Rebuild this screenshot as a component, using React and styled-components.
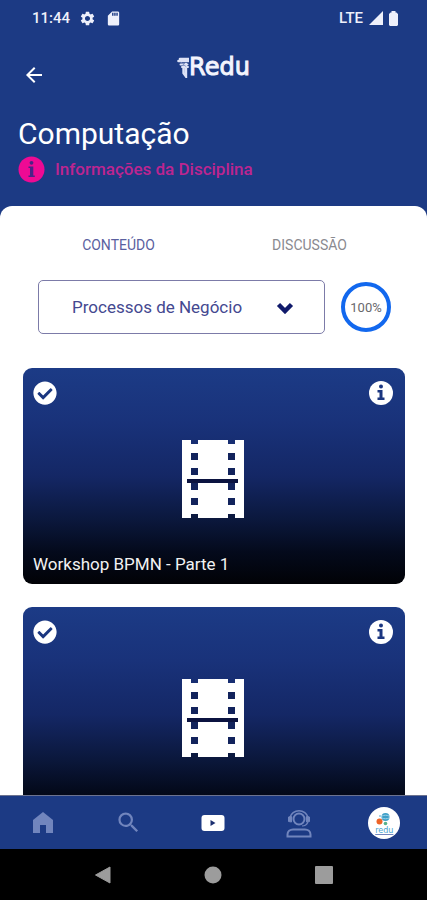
import { createGlobalStyle, styled } from "styled-components";
import {
    MdArrowBack,
    MdSdCard,
    MdSearch,
    MdSettings,
} from "react-icons/md";
import { FaCheckCircle } from "react-icons/fa";

const GlobalStyle = createGlobalStyle`
    * {
        box-sizing: border-box;
    }
    body {
        margin: 0;
        background-color: #1c3a84;
        font-family: Roboto, "Liberation Sans", sans-serif;
    }
    button, select {
        font-family: inherit;
    }
    svg {
        display: block;
    }
`;

const Screen = styled.div`
    display: flex;
    flex-direction: column;
    height: 100vh;
    background-color: #1c3a84;
    overflow: hidden;
`;

const StatusBar = styled.div`
    display: flex;
    align-items: center;
    justify-content: space-between;
    height: 36px;
    padding: 0 29px 0 32px;
    color: #eef0fb;
    font-size: 15px;
    font-weight: 500;
`;

const StatusGroup = styled.div`
    display: flex;
    align-items: center;
    gap: ${(props) => props.$gap}px;
`;

const TopBar = styled.header`
    display: grid;
    grid-template-columns: 1fr auto 1fr;
    align-items: center;
    height: 64px;
    padding: 0 22px;
`;

const IconButton = styled.button`
    display: flex;
    padding: 0;
    border: 0;
    background: none;
    color: #fff;
    cursor: pointer;
`;

const BackButton = styled(IconButton)`
    justify-self: start;
    padding-top: 14px;
`;

const Brand = styled.div`
    display: flex;
    align-items: center;
    padding-bottom: 2px;
    color: #f3f4fd;
    font-family: "DejaVu Sans", sans-serif;
    font-size: 24px;
    line-height: 28px;
    -webkit-text-stroke: 1px currentColor;
`;

const Heading = styled.div`
    padding: 15px 18px 23px;
`;

const Title = styled.h1`
    margin: 0;
    color: #fff;
    font-size: 30px;
    font-weight: 400;
    line-height: 38px;
`;

const InfoLink = styled.a`
    display: flex;
    align-items: center;
    gap: 10px;
    padding-top: 2px;
    color: #bd2590;
    font-size: 17px;
    font-weight: 500;
    line-height: 28px;
    text-decoration: none;
`;

const Panel = styled.main`
    flex: 1;
    min-height: 0;
    padding: 0 22px 0 23px;
    border-radius: 12px 12px 0 0;
    background-color: #fff;
    overflow: hidden;
`;

const Tabs = styled.div`
    display: grid;
    grid-template-columns: 1fr 1fr;
    padding-top: 21px;
`;

const Tab = styled.button`
    height: 36px;
    padding: 0;
    border: 0;
    background: none;
    color: ${(props) => (props.$active ? "#5a60a0" : "#8a8a90")};
    font-size: 14px;
    cursor: pointer;
`;

const Filter = styled.div`
    display: flex;
    align-items: center;
    gap: 16px;
    padding: 17px 14px 34px 15px;
`;

const SelectBox = styled.div`
    display: grid;
    flex: 1;
    align-items: center;

    > * {
        grid-area: 1 / 1;
    }
    svg {
        justify-self: end;
        margin-right: 31px;
        pointer-events: none;
    }
`;

const Select = styled.select`
    width: 100%;
    height: 54px;
    padding: 0 56px 0 33px;
    border: 1px solid #7c7ba8;
    border-radius: 5px;
    appearance: none;
    background-color: #fff;
    color: #444890;
    font-size: 17px;
`;

const Progress = styled.div`
    display: flex;
    align-items: center;
    justify-content: center;
    width: 50px;
    height: 50px;
    border: 4px solid #1268ee;
    border-radius: 50%;
    color: #68686c;
    font-size: 13px;
`;

const Lessons = styled.div`
    display: flex;
    flex-direction: column;
    gap: 23px;
`;

const Card = styled.article`
    display: flex;
    flex-direction: column;
    height: 216px;
    padding: 13px 12px 10px 10px;
    border-radius: 9px;
    background: linear-gradient(#1c3b86 0%, #19327a 25%, #142765 50%, #0b183d 70%, #040a1c 85%, #010206 100%);
    color: #fff;
`;

const CardTop = styled.div`
    display: flex;
    justify-content: space-between;
`;

const Film = styled.div`
    display: flex;
    justify-content: center;
    padding-top: 35px;
`;

const CardTitle = styled.h2`
    margin: auto 0 0;
    color: #f2f2f2;
    font-size: 17px;
    font-weight: 400;
    line-height: 20px;
`;

const BottomNav = styled.nav`
    display: grid;
    grid-template-columns: repeat(5, 1fr);
    align-items: center;
    height: 54px;
    border-top: 1px solid #6c7390;
    background-color: #1c3a84;
`;

const NavLink = styled.a`
    display: flex;
    justify-content: center;
    color: ${(props) => (props.$active ? "#fff" : "#7185bd")};
`;

const SystemBar = styled.div`
    display: grid;
    grid-template-columns: repeat(3, 1fr);
    justify-items: center;
    align-items: center;
    height: 51px;
    padding: 0 48px;
    background-color: #000;
`;

const SystemButton = styled(IconButton)`
    color: #9c9c9c;
`;

const Avatar = styled.span`
    display: flex;
    flex-direction: column;
    align-items: center;
    width: 32px;
    height: 32px;
    padding-top: 5px;
    border-radius: 50%;
    background-color: #fff;
    color: #48a3cf;
    font-family: "DejaVu Sans", sans-serif;
    font-size: 8px;
    line-height: 9px;
`;

function SignalIcon() {
    return (
        <svg width="14" height="14" viewBox="0 0 14 14" fill="currentColor" aria-hidden="true">
            <path d="M14 0v14H0z" />
        </svg>
    );
}

function BatteryIcon() {
    return (
        <svg width="9" height="15" viewBox="0 0 9 15" fill="currentColor" aria-hidden="true">
            <path d="M2.500 0h4v1.500h1L9 3v11l-1 1H1l-1-1V3l1.500-1.500h1z" />
        </svg>
    );
}

function TreeMark() {
    return (
        <svg width="12" height="22" viewBox="0 0 12 22" fill="none" stroke="#dfe3f6" strokeLinecap="round">
            <path d="M1.500 5h11M3 3h10" strokeWidth="2.600" />
            <path d="M3.500 8.500h7M5 11h6" strokeWidth="2" />
            <path d="M6.500 11v6l2.500 3.500V8" strokeWidth="2.400" />
            <path d="M4 6.500l5 4" stroke="#8b9bcb" />
        </svg>
    );
}

function InfoBadge() {
    return (
        <svg width="27" height="27" viewBox="0 0 27 27" aria-hidden="true">
            <circle cx="13.500" cy="13.500" r="13" fill="#ee0a94" />
            <circle cx="13.500" cy="6.800" r="1.900" fill="#4a2387" />
            <path d="M10.500 10.500h4.800v9h1.500v1.500h-6.300v-1.500h1.500v-7.500h-1.500z" fill="#4a2387" />
        </svg>
    );
}

function Chevron() {
    return (
        <svg width="18" height="14" viewBox="0 0 18 14" aria-hidden="true">
            <path d="M2.500 4.500L9 11l6.500-6.500" fill="none" stroke="#101a6b" strokeWidth="4.500" />
        </svg>
    );
}

function InfoIcon() {
    return (
        <svg width="24" height="24" viewBox="0 0 24 24" aria-hidden="true">
            <circle cx="12" cy="12" r="12" fill="#fff" />
            <circle cx="12" cy="5.500" r="2" fill="#1b3680" />
            <path d="M8.500 9h5v7.500h2v2.500h-7v-2.500h2v-5h-2z" fill="#1b3680" />
        </svg>
    );
}

function FilmStrip() {
    const holes = [13, 28, 43, 58];
    return (
        <svg width="62" height="78" viewBox="0 0 62 78" aria-hidden="true">
            <path d="M0 0h9v4h7V0h30v4h7V0h9v78h-9v-4h-7v4H16v-4H9v4H0z" fill="#fff" />
            {holes.map((y) => (
                <path key={y} d={`M9 ${y}h7v7h-7zM46 ${y}h7v7h-7z`} fill="#12235c" />
            ))}
            <path d="M5 39h51v4H5z" fill="#0b1340" />
        </svg>
    );
}

function VideoIcon() {
    return (
        <svg width="24" height="18" viewBox="0 0 24 18" aria-hidden="true">
            <rect x="0.500" y="1" width="23" height="16" rx="3" fill="#fff" />
            <path d="M9.500 6v6l5-3z" fill="#1c3070" />
        </svg>
    );
}

function SupportIcon() {
    return (
        <svg width="26" height="30" viewBox="0 0 26 30" fill="none" stroke="currentColor" strokeWidth="2" aria-hidden="true">
            <circle cx="13" cy="11" r="5.500" />
            <path d="M4 9.500a9.200 8.500 0 0 1 18 0" strokeWidth="1.600" />
            <path d="M2.500 9v4.500l3 .500V8.500zM23.500 9v4.500l-3 .500V8.500z" fill="currentColor" strokeWidth="1" />
            <path d="M22 14c-1 2.500-3 4-6 4" strokeWidth="1.200" />
            <path d="M1.500 28.500v-2c0-3 2.500-5 5.500-5h12c3 0 5.500 2 5.500 5v2z" />
        </svg>
    );
}

function AvatarMark() {
    return (
        <svg width="16" height="14" viewBox="0 0 16 14" aria-hidden="true">
            <circle cx="9.500" cy="5" r="4" fill="#3e9fc8" />
            <path d="M6 4c2-1 5-1 7 0M6 6c2 1 5 1 7 0" fill="none" stroke="#9bd0e6" />
            <circle cx="3.500" cy="9.500" r="3" fill="#ee6427" />
            <circle cx="9.500" cy="11.500" r="1.800" fill="#58b28b" />
            <circle cx="4" cy="4" r="1" fill="#8ac4df" />
        </svg>
    );
}

const lessons = [
    { id: 1, title: "Workshop BPMN - Parte 1" },
    { id: 2 },
];

export default function App() {
    return (
        <Screen>
            <GlobalStyle />
            <StatusBar>
                <StatusGroup $gap={9}>
                    11:44
                    <MdSettings size={17} />
                    <MdSdCard size={17} />
                </StatusGroup>
                <StatusGroup $gap={6}>
                    LTE
                    <SignalIcon />
                    <BatteryIcon />
                </StatusGroup>
            </StatusBar>
            <TopBar>
                <BackButton aria-label="Voltar">
                    <MdArrowBack size={24} />
                </BackButton>
                <Brand>
                    <TreeMark />
                    Redu
                </Brand>
            </TopBar>
            <Heading>
                <Title>Computação</Title>
                <InfoLink href="#informacoes">
                    <InfoBadge />
                    Informações da Disciplina
                </InfoLink>
            </Heading>
            <Panel>
                <Tabs role="tablist">
                    <Tab role="tab" aria-selected="true" $active>CONTEÚDO</Tab>
                    <Tab role="tab" aria-selected="false">DISCUSSÃO</Tab>
                </Tabs>
                <Filter>
                    <SelectBox>
                        <Select aria-label="Módulo">
                            <option>Processos de Negócio</option>
                        </Select>
                        <Chevron />
                    </SelectBox>
                    <Progress>100%</Progress>
                </Filter>
                <Lessons>
                    {lessons.map((lesson) => (
                        <Card key={lesson.id}>
                            <CardTop>
                                <FaCheckCircle size={24} />
                                <IconButton aria-label="Informações da aula">
                                    <InfoIcon />
                                </IconButton>
                            </CardTop>
                            <Film>
                                <FilmStrip />
                            </Film>
                            {lesson.title && <CardTitle>{lesson.title}</CardTitle>}
                        </Card>
                    ))}
                </Lessons>
            </Panel>
            <BottomNav>
                <NavLink href="#inicio" aria-label="Início">
                    <svg width="20" height="22" viewBox="0 0 20 22" fill="currentColor">
                        <path d="M10 0L0 8v13h7v-8h6v8h7V8z" />
                    </svg>
                </NavLink>
                <NavLink href="#busca" aria-label="Buscar">
                    <MdSearch size={27} />
                </NavLink>
                <NavLink href="#aulas" aria-label="Aulas" $active>
                    <VideoIcon />
                </NavLink>
                <NavLink href="#suporte" aria-label="Suporte">
                    <SupportIcon />
                </NavLink>
                <NavLink href="#perfil" aria-label="Perfil">
                    <Avatar>
                        <AvatarMark />
                        redu
                    </Avatar>
                </NavLink>
            </BottomNav>
            <SystemBar>
                <SystemButton aria-label="Voltar">
                    <svg width="18" height="20" viewBox="0 0 18 20">
                        <path d="M16 2v16L1.500 10z" fill="currentColor" stroke="currentColor" strokeLinejoin="round" />
                    </svg>
                </SystemButton>
                <SystemButton aria-label="Tela inicial">
                    <svg width="18" height="18" viewBox="0 0 18 18">
                        <circle cx="9" cy="9" r="8.500" fill="currentColor" />
                    </svg>
                </SystemButton>
                <SystemButton aria-label="Recentes">
                    <svg width="18" height="18" viewBox="0 0 18 18">
                        <rect width="18" height="18" rx="1" fill="currentColor" />
                    </svg>
                </SystemButton>
            </SystemBar>
        </Screen>
    );
}
